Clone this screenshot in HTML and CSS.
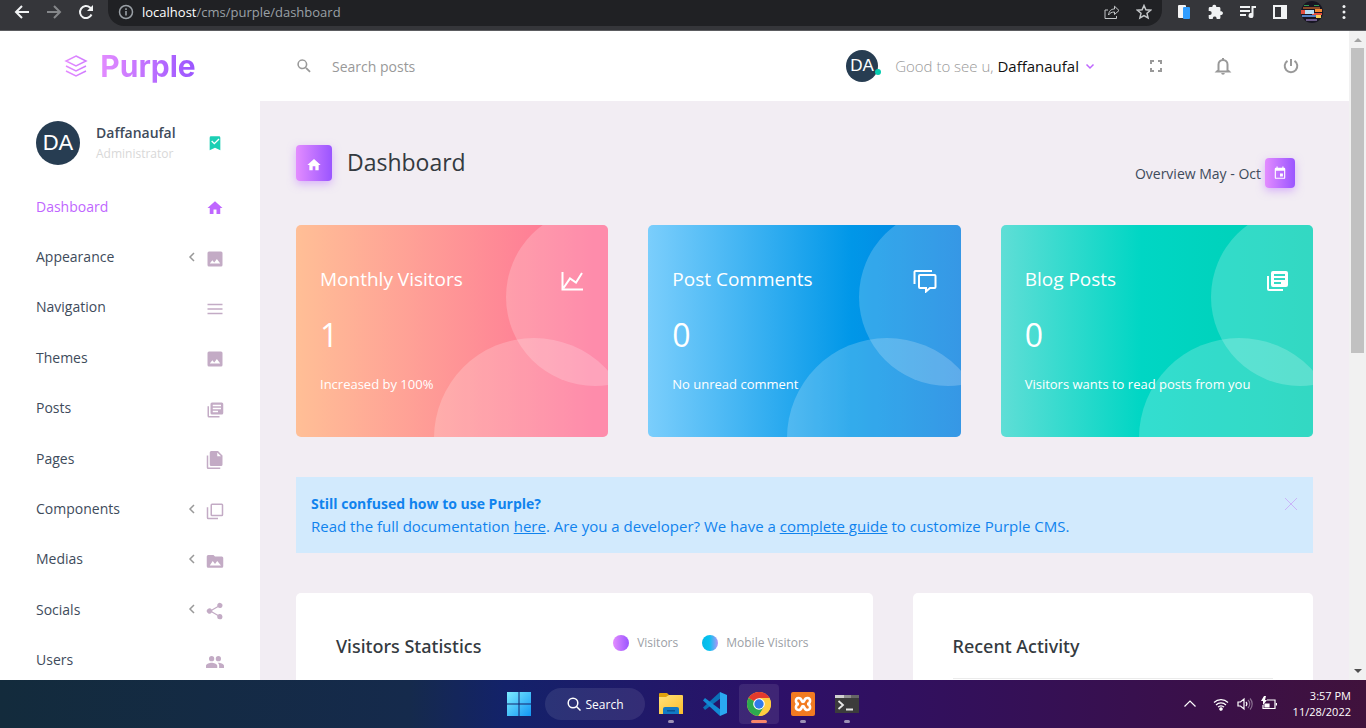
FILE: index.html
```html
<!DOCTYPE html>
<html lang="en">
<head>
<meta charset="utf-8">
<meta name="viewport" content="width=device-width, initial-scale=1">
<title>Purple CMS - Dashboard</title>
<link rel="stylesheet" href="styles.css">
</head>
<body>
<svg class="defs" aria-hidden="true">
  <defs>
    <linearGradient id="g-brand" x1="0" x2="1"><stop offset="0" stop-color="#e58cff"/><stop offset="1" stop-color="#d07cff"/></linearGradient>
    <linearGradient id="g-win" x1="0" y1="0" x2="1" y2="1"><stop offset="0" stop-color="#7cebff"/><stop offset="1" stop-color="#1296f5"/></linearGradient>
    <linearGradient id="g-folder" x1="0" y1="0" x2="1" y2="1"><stop offset="0" stop-color="#ffe27a"/><stop offset="1" stop-color="#fbbd2c"/></linearGradient>
  </defs>
  <symbol id="home" viewBox="0 0 24 24"><path d="M10 20v-6h4v6h5v-8h3L12 3 2 12h3v8z"/></symbol>
  <symbol id="image" viewBox="0 0 24 24"><path d="M22 20V4a2 2 0 0 0-2-2H4a2 2 0 0 0-2 2v16a2 2 0 0 0 2 2h16a2 2 0 0 0 2-2zM5 18l3.500-4.500 2.500 3 3.500-4.500 4.500 6z"/></symbol>
  <symbol id="menu" viewBox="0 0 24 24"><path d="M2 5h20v2H2zm0 6h20v2H2zm0 6h20v2H2z"/></symbol>
  <symbol id="library" viewBox="0 0 24 24"><path d="M4 7H2v13a2 2 0 0 0 2 2h14v-2H4zm17-5H8a2 2 0 0 0-2 2v12a2 2 0 0 0 2 2h13a2 2 0 0 0 2-2V4a2 2 0 0 0-2-2zM9 5h11v2H9zm0 4h11v2H9zm0 4h7v2H9z"/></symbol>
  <symbol id="pages" viewBox="0 0 24 24"><path d="M3 6H1v16a2 2 0 0 0 2 2h16v-2H3zM16 0H7a2 2 0 0 0-2 2v16a2 2 0 0 0 2 2h13a2 2 0 0 0 2-2V6zm-1 7V2l5 5z"/></symbol>
  <symbol id="boxes" viewBox="0 0 24 24"><path d="M3 7H1v14a2 2 0 0 0 2 2h13v-2H3zM21 2H8a2 2 0 0 0-2 2v13a2 2 0 0 0 2 2h13a2 2 0 0 0 2-2V4a2 2 0 0 0-2-2zm0 15H8V4h13z"/></symbol>
  <symbol id="folder-image" viewBox="0 0 24 24"><path d="M21 6h-9l-2-2H3a2 2 0 0 0-2 2v13a2 2 0 0 0 2 2h18a2 2 0 0 0 2-2V8a2 2 0 0 0-2-2zM5 18l4-6 3 4 3-4 5 6z"/></symbol>
  <symbol id="share" viewBox="0 0 24 24"><path d="M18 16.100c-.8 0-1.500.3-2 .8l-7.600-4.300a4 4 0 0 0 0-1.200L16 7.100A3.500 3.500 0 1 0 15 5l.1.800-7.500 4.300a3.500 3.500 0 1 0 0 3.800l7.500 4.300-.1.800a3.500 3.500 0 1 0 3-2.900z"/></symbol>
  <symbol id="users" viewBox="0 0 24 24"><path d="M16.500 11a3.500 3.500 0 1 0 0-7 3.500 3.500 0 0 0 0 7zm-9 0a3.500 3.500 0 1 0 0-7 3.500 3.500 0 0 0 0 7zm0 2C5 13 0 14.200 0 17v3h15v-3c0-2.800-5-4-7.500-4zm9 0h-1c1.200.9 2 2.200 2 4v3H24v-3c0-2.800-5-4-7.500-4z"/></symbol>
  <symbol id="left" viewBox="0 0 12 12"><path d="M8 2 4 6l4 4" fill="none" stroke="currentColor" stroke-width="1.500"/></symbol>
  <symbol id="down" viewBox="0 0 12 12"><path d="m2.500 4.500 3.500 3.500 3.500-3.500" fill="none" stroke="currentColor" stroke-width="1.500"/></symbol>
  <symbol id="search" viewBox="0 0 24 24"><path d="M9.500 2a7.500 7.500 0 0 1 5.900 12.100l.5.400h.8l5.300 5.500-1.800 1.800-5.500-5.300v-.8l-.4-.4A7.500 7.500 0 1 1 9.500 2m0 2.300a5.200 5.200 0 1 0 0 10.400 5.200 5.200 0 0 0 0-10.400z"/></symbol>
</svg>

<header class="browser">
  <button class="tool" aria-label="Back"><svg viewBox="0 0 16 16"><path class="line" d="M15 8H2m6-6L2 8l6 6"/></svg></button>
  <button class="tool dim" aria-label="Forward"><svg viewBox="0 0 16 16"><path class="line" d="M1 8h13M8 2l6 6-6 6"/></svg></button>
  <button class="tool" aria-label="Reload"><svg viewBox="0 0 16 16"><path class="line" d="M13.500 10.500A6 6 0 1 1 12 3.600l2 2"/><path d="M15 1v6H9z"/></svg></button>
  <div class="omnibox">
    <svg class="i16 muted" viewBox="0 0 16 16"><circle class="thin" cx="8" cy="8" r="6.500"/><path d="M7.200 7h1.600v4.500H7.200zM7.200 4.300h1.600v1.600H7.200z"/></svg>
    <span class="url"><b>localhost</b>/cms/purple/dashboard</span>
    <button class="tool soft" aria-label="Share"><svg viewBox="0 0 16 16"><path class="hair" d="M4 6H1v8.500h11.500V12M4.500 11c.5-4 2.500-6 6-6V2.200L15 6.500l-4.500 4V8c-3 0-4.500 1-6 3z"/></svg></button>
    <button class="tool soft" aria-label="Bookmark"><svg viewBox="0 0 16 16"><path class="thin" d="m8 1.500 1.900 4.300 4.700.4-3.600 3.100 1.100 4.600L8 11.500l-4.100 2.400L5 9.300 1.400 6.200l4.700-.4z"/></svg></button>
  </div>
  <div class="extensions">
    <button class="tool" aria-label="Device preview"><svg viewBox="0 0 16 16"><rect x="2" y="1" width="8" height="13" rx="1" fill="#f5f5f5"/><rect x="7" y="3" width="7" height="12" rx="1" fill="#2f9dff"/></svg></button>
    <button class="tool" aria-label="Extensions"><svg viewBox="0 0 16 16"><path d="M13.500 7.200h-1.100V4.400c0-.8-.6-1.400-1.400-1.400H8.200V2.100a2 2 0 0 0-3.800 0V3H2c-.7 0-1.300.6-1.300 1.400v2.500h1a2 2 0 0 1 0 4h-1v2.800c0 .8.600 1.300 1.300 1.300h2.800v-1a2 2 0 0 1 3.800 0v1H11c.8 0 1.400-.5 1.400-1.300v-2.800h1.100a1.900 1.900 0 0 0 0-3.700z"/></svg></button>
    <button class="tool" aria-label="Media"><svg viewBox="0 0 16 16"><path d="M0 2h10v2H0zm0 4h10v2H0zm0 4h6v2H0zM11.500 2H16v2h-2.500v7.500a2.500 2.500 0 1 1-2-2.400z"/></svg></button>
    <button class="tool" aria-label="Side panel"><svg viewBox="0 0 16 16"><path fill-rule="evenodd" d="M1 1h14v14H1zm2 2v10h6V3z"/></svg></button>
    <button class="tool profile" aria-label="Profile"><svg viewBox="0 0 22 22"><circle cx="11" cy="11" r="11" fill="#171522"/><path d="M3 4h5v1H3zm10 0h5v1h-5z" fill="#2f9a50"/><path d="M2 6h17v2H2z" fill="#8b4b27"/><path d="M0 9h9v4H0zm11 3h10v2H11z" fill="#e24f3f"/><path d="M4 9h9v4H4z" fill="#b8def5"/><path d="M14 8h7v3h-7z" fill="#f18a35"/><path d="M1 14h15v2H1z" fill="#5482c5"/><path d="M15 14h5v3h-5z" fill="#f7cf59"/><path d="M5 18h11v2H5z" fill="#6b5b89"/></svg></button>
    <button class="tool" aria-label="Menu"><svg viewBox="0 0 16 16"><circle cx="8" cy="2.500" r="1.500"/><circle cx="8" cy="8" r="1.500"/><circle cx="8" cy="13.500" r="1.500"/></svg></button>
  </div>
</header>

<div class="viewport">
  <div class="page">
    <header class="topbar">
      <a class="brand" href="#"><svg class="layers" viewBox="0 0 24 24"><path d="m12 2 10 5-10 5-10-5zM2 12l10 5 10-5M2 17l10 5 10-5"/></svg><span>Purple</span></a>
      <form class="find">
        <label for="q" aria-label="Search posts"><svg class="i16"><use href="#search"/></svg></label>
        <input id="q" type="text" placeholder="Search posts">
      </form>
      <button class="account"><span class="avatar small">DA<i class="online"></i></span><span class="greet">Good to see u, <em>Daffanaufal</em></span><svg class="i12"><use href="#down"/></svg></button>
      <div class="actions">
        <button aria-label="Fullscreen"><svg class="i16" viewBox="0 0 16 16"><path class="line" d="M3 6V3h3m4 0h3v3m0 4v3h-3m-4 0H3v-3"/></svg></button>
        <button aria-label="Notifications"><svg class="i18" viewBox="0 0 18 18"><path class="line" d="M4.500 13V7.500a4.500 4.500 0 0 1 9 0V13l1.500 1.500H3zM9 3V1"/><path d="M7.200 16h3.600a1.800 1.800 0 0 1-3.600 0z"/></svg></button>
        <button aria-label="Log out"><svg class="i18" viewBox="0 0 18 18"><path class="line" d="M9 2v7M5.500 3.800a6.300 6.300 0 1 0 7 0"/></svg></button>
      </div>
    </header>

    <div class="body">
      <aside class="sidebar">
        <div class="profile-card">
          <span class="avatar">DA</span>
          <div class="who"><strong>Daffanaufal</strong><small>Administrator</small></div>
          <svg class="i16 check" viewBox="0 0 24 24"><path d="M18 2H6a2 2 0 0 0-2 2v19l8-4 8 4V4a2 2 0 0 0-2-2z"/><path class="tick" d="m7 9 4 4 7-7"/></svg>
        </div>
        <nav class="nav">
          <a class="active" href="#"><span>Dashboard</span><svg class="i18"><use href="#home"/></svg></a>
          <a href="#"><span>Appearance</span><svg class="i12 arrow"><use href="#left"/></svg><svg class="i18"><use href="#image"/></svg></a>
          <a href="#"><span>Navigation</span><svg class="i18"><use href="#menu"/></svg></a>
          <a href="#"><span>Themes</span><svg class="i18"><use href="#image"/></svg></a>
          <a href="#"><span>Posts</span><svg class="i18"><use href="#library"/></svg></a>
          <a href="#"><span>Pages</span><svg class="i18"><use href="#pages"/></svg></a>
          <a href="#"><span>Components</span><svg class="i12 arrow"><use href="#left"/></svg><svg class="i18"><use href="#boxes"/></svg></a>
          <a href="#"><span>Medias</span><svg class="i12 arrow"><use href="#left"/></svg><svg class="i18"><use href="#folder-image"/></svg></a>
          <a href="#"><span>Socials</span><svg class="i12 arrow"><use href="#left"/></svg><svg class="i18"><use href="#share"/></svg></a>
          <a href="#"><span>Users</span><svg class="i18"><use href="#users"/></svg></a>
        </nav>
      </aside>

      <main class="content">
        <div class="heading">
          <span class="chip large"><svg class="i16"><use href="#home"/></svg></span>
          <h1>Dashboard</h1>
          <div class="period"><span>Overview May - Oct</span><button class="chip" aria-label="Choose period"><svg class="i14" viewBox="0 0 24 24"><path fill-rule="evenodd" d="M19 3h-1V1h-2v2H8V1H6v2H5a2 2 0 0 0-2 2v15a2 2 0 0 0 2 2h14a2 2 0 0 0 2-2V5a2 2 0 0 0-2-2zM5 8h14v12H5zm7 5h5v5h-5z"/></svg></button></div>
        </div>

        <div class="grid">
          <section class="stat coral">
            <header><h2>Monthly Visitors</h2><svg class="i24" viewBox="0 0 24 24"><path class="line" d="M2.500 3v17.500H23M3.500 19 10 9.500l6 4L22 4"/></svg></header>
            <p class="value">1</p><p class="note">Increased by 100%</p>
          </section>
          <section class="stat blue">
            <header><h2>Post Comments</h2><svg class="i24" viewBox="0 0 24 24"><path class="line" d="M1.500 15V3a1 1 0 0 1 1-1H19M7 6h14.500a1 1 0 0 1 1 1v11a1 1 0 0 1-1 1H17l-4 3.500V19H7a1 1 0 0 1-1-1V7a1 1 0 0 1 1-1z"/></svg></header>
            <p class="value">0</p><p class="note">No unread comment</p>
          </section>
          <section class="stat teal">
            <header><h2>Blog Posts</h2><svg class="i24"><use href="#library"/></svg></header>
            <p class="value">0</p><p class="note">Visitors wants to read posts from you</p>
          </section>

          <section class="alert">
            <div><strong>Still confused how to use Purple?</strong><p>Read the full documentation <a href="#">here</a>. Are you a developer? We have a <a href="#">complete guide</a> to customize Purple CMS.</p></div>
            <button aria-label="Dismiss"><svg class="i14" viewBox="0 0 14 14"><path d="m1 1 12 12M13 1 1 13"/></svg></button>
          </section>

          <section class="panel wide">
            <h3>Visitors Statistics</h3>
            <ul class="legend"><li><i class="dot violet"></i>Visitors</li><li><i class="dot cyan"></i>Mobile Visitors</li></ul>
          </section>
          <section class="panel narrow"><h3>Recent Activity</h3><hr></section>
        </div>
      </main>
    </div>
  </div>
  <div class="scrollbar" aria-hidden="true"><i class="up"></i><i class="thumb"></i><i class="dn"></i></div>
</div>

<footer class="taskbar">
  <div class="apps">
    <button class="app" aria-label="Start"><svg viewBox="0 0 24 24"><path fill="url(#g-win)" d="M0 0h11.500v11.500H0zm12.500 0H24v11.500H12.500zM0 12.500h11.500V24H0zm12.500 0H24V24H12.500z"/></svg></button>
    <button class="task-search"><svg class="i14" viewBox="0 0 14 14"><circle cx="6" cy="6" r="4.800"/><path d="m9.500 9.500 4 4"/></svg>Search</button>
    <button class="app open" aria-label="File Explorer"><svg viewBox="0 0 24 24"><path d="M0 2a1 1 0 0 1 1-1h7l3 3v5H0z" fill="#e0a10c"/><path d="M0 5h7l3-2h13a1 1 0 0 1 1 1v18H0z" fill="url(#g-folder)"/><path d="M4 22v-5a2 2 0 0 1 2-2h12a2 2 0 0 1 2 2v5z" fill="#117ac5"/><path d="M8 18h8v1.500H8z" fill="#095293"/></svg></button>
    <button class="app" aria-label="Visual Studio Code"><svg viewBox="0 0 24 24"><path d="M17 0 0 15.500 2 18 18 6z" fill="#0b70b8"/><path d="M2 6 0 8.500 17 24l1-6z" fill="#1289d4"/><path d="m17 0 7 3v18l-7 3z" fill="#2aa8f2"/></svg></button>
    <button class="app current" aria-label="Chrome"><svg viewBox="0 0 24 24"><circle cx="12" cy="12" r="12" fill="#ffcd40"/><path d="M12 12 1.600 6a12 12 0 0 1 20.800 0z" fill="#e33b2e"/><path d="M1.600 6a12 12 0 0 0 9.800 18L17 15l-5-3z" fill="#2da94f"/><path d="M12 6h10.400A12 12 0 0 1 11.400 24L17 15z" fill="#ffcd40"/><circle cx="12" cy="12" r="5.800" fill="#fff"/><circle cx="12" cy="12" r="4.700" fill="#317bea"/></svg></button>
    <button class="app open" aria-label="XAMPP"><svg viewBox="0 0 24 24"><rect width="24" height="24" rx="2" fill="#f27b21"/><path d="M8 12c-3.500 0-4.500-6-.5-6S10 10 12 10s.500-4 4.500-4 3 6-.5 6c3.500 0 4.500 6 .5 6S14 14 12 14s-.5 4-4.500 4-3-6 .5-6z" fill="none" stroke="#fff" stroke-width="2.600"/></svg></button>
    <button class="app open" aria-label="Terminal"><svg viewBox="0 0 24 24"><path d="M0 3h24v18H0z" fill="#3c3c3c"/><path d="M0 3h9v3H0z" fill="#d0d0d0"/><path d="M9 3h7v3H9z" fill="#8f8f8f"/><path d="M16 3h8v3h-8z" fill="#666"/><path d="m3.500 9 4.500 4-4.500 4M11 17.500h7" fill="none" stroke="#e8e8e8" stroke-width="1.800"/></svg></button>
  </div>
  <div class="tray">
    <svg class="i14" viewBox="0 0 14 14"><path d="m1.500 9.500 5.500-5.500 5.500 5.500"/></svg>
    <div class="status">
      <svg class="i16" viewBox="0 0 16 16"><path d="M1 6.500a10 10 0 0 1 14 0M3 9a7 7 0 0 1 10 0M5 11.200a4 4 0 0 1 6 0"/><circle cx="8" cy="13" r="1.200" fill="#fff"/></svg>
      <svg class="i16" viewBox="0 0 16 16"><path d="M1 6h2.500L7 3v10l-3.500-3H1zM9 6a3 3 0 0 1 0 4"/><path opacity=".4" d="M11 4a5.500 5.500 0 0 1 0 8M13 2.500a8 8 0 0 1 0 11"/></svg>
      <svg class="i16" viewBox="0 0 16 16"><path d="M6 4h8v8.500H2V9M15.500 7v2.500"/><path fill="#fff" d="M4 8h4v3H4z"/><path fill="#fff" stroke="none" d="M3 0 0 5h2v4l4-5H4l1-4z"/></svg>
    </div>
    <div class="clock"><span>3:57 PM</span><span>11/28/2022</span></div>
  </div>
</footer>
</body>
</html>
```

FILE: styles.css
```css
:root {
  --ui: "Open Sans", "Noto Sans", sans-serif;
  --violet: linear-gradient(90deg, #e38cff, #9a55ff);
  --ink: #3e4b5b;
  --mauve: #c3abc5;
}
* { box-sizing: border-box; margin: 0; padding: 0; }
body { display: flex; flex-direction: column; height: 100vh; overflow: hidden; font-family: var(--ui); font-size: 14px; color: var(--ink); }
button { border: 0; background: none; font: inherit; color: inherit; cursor: pointer; }
svg { display: block; flex: none; fill: currentColor; }
a { color: inherit; text-decoration: none; }
.defs { position: absolute; width: 0; height: 0; }
.i12 { width: 12px; height: 12px; }
.i14 { width: 14px; height: 14px; }
.i16 { width: 16px; height: 16px; }
.i18 { width: 18px; height: 18px; }
.i24 { width: 24px; height: 24px; }
.line { fill: none; stroke: currentColor; stroke-width: 2; }
.thin { fill: none; stroke: currentColor; stroke-width: 1.5; }
.hair { fill: none; stroke: currentColor; stroke-width: 1; }

/* Browser toolbar */
.browser { display: flex; align-items: flex-start; flex: none; height: 31px; padding-left: 14px; background: #35363a; border-bottom: 1px solid #5b5c60; color: #f1f3f4; }
.tool { display: flex; flex: none; align-items: center; justify-content: center; width: 16px; height: 24px; margin-right: 16px; }
.tool svg { width: 16px; height: 16px; }
.dim { color: #85878a; }
.soft { color: #c4c7c9; margin: 0 0 0 16px; }
.omnibox { display: flex; align-items: center; flex: 1; height: 26px; margin: 0 14px 0 -2px; padding: 0 10px 2px; background: #202124; border-radius: 0 0 16px 16px; }
.omnibox .muted { color: #9aa0a6; }
.url { flex: 1; margin-left: 8px; font-size: 13px; color: #9aa0a6; }
.url b { font-weight: 400; color: #fff; }
.extensions { display: flex; padding-right: 14px; gap: 16px; }
.extensions .tool { margin: 0; }
.extensions .profile { width: 22px; margin: 0 -3px; }
.profile svg { width: 22px; height: 22px; }

/* Scrollable page area */
.viewport { display: flex; flex: 1; min-height: 0; }
.page { flex: 1; min-width: 0; overflow: hidden; background: #fff; }
.scrollbar { display: flex; flex-direction: column; align-items: center; flex: none; width: 17px; background: #f1f1f1; }
.scrollbar .thumb { width: 13px; height: 305px; background: #c1c1c1; }
.up, .dn { width: 0; height: 0; border: 4px solid transparent; }
.up { margin: 3px 0 6px; border-bottom-color: #a3a3a3; }
.dn { margin: auto 0 3px; border-top-color: #505050; }

/* Top bar */
.topbar { display: flex; align-items: center; height: 70px; padding-right: 49px; }
.brand { display: flex; align-items: center; justify-content: center; gap: 12px; width: 260px; font-family: Inter, sans-serif; font-size: 30px; line-height: 36px; font-weight: 700; }
.brand span { background: var(--violet); background-clip: text; -webkit-background-clip: text; color: transparent; }
.layers { width: 24px; height: 24px; fill: none; stroke: url(#g-brand); stroke-width: 1.5; }
.find { display: flex; align-items: center; flex: 1; gap: 20px; padding-left: 36px; }
.find svg { color: #999; }
.find input { width: 200px; border: 0; outline: 0; font: 14px var(--ui); color: #777; }
.find input::placeholder { color: #999; opacity: 1; }
.account { display: flex; align-items: center; font-size: 15px; color: #bf66ff; gap: 5px; }
.greet { font-weight: 300; color: #999; }
.greet em { font-style: normal; font-weight: 400; color: #111; }
.avatar { display: flex; flex: none; align-items: center; justify-content: center; width: 44px; height: 44px; border-radius: 50%; background: #273d52; color: #fff; font: 22px "Liberation Sans", sans-serif; }
.avatar.small { position: relative; width: 32px; height: 32px; margin-right: 12px; font-size: 17px; }
.online { position: absolute; right: -3px; bottom: 7px; width: 6px; height: 6px; border-radius: 50%; background: #05cdb0; }
.actions { display: flex; align-items: center; gap: 50px; margin-left: 52px; color: #999; }

/* Sidebar */
.body { display: flex; align-items: stretch; }
.sidebar { flex: none; width: 260px; }
.profile-card { display: flex; align-items: center; gap: 16px; padding: 20px 37px 16px 36px; }
.who { display: flex; flex: 1; flex-direction: column; gap: 3px; padding-top: 1px; }
.who strong { font-size: 14px; line-height: 18px; font-weight: 600; }
.who small { font-size: 12px; line-height: 18px; color: #d8d8d8; }
.check { color: #1bcfb4; }
.tick { fill: none; stroke: #fff; stroke-width: 2; }
.nav { display: grid; grid-auto-rows: 1fr; min-height: 504px; }
.nav a { display: flex; align-items: center; gap: 8px; padding: 0 36px; }
.nav span { flex: 1; }
.nav svg { margin-top: 4px; color: var(--mauve); }
.nav .arrow { margin-top: 0; color: #999; }
.nav .active, .nav .active svg { color: #bf66ff; }

/* Content */
.content { flex: 1; min-width: 0; padding: 44px 36px; background: #f2edf3; }
.heading { display: flex; align-items: flex-start; gap: 15px; padding-right: 18px; margin-bottom: 37px; }
.heading h1 { flex: 1; font-size: 23px; line-height: 34px; font-weight: 400; color: #343a40; }
.chip { display: flex; align-items: center; justify-content: center; flex: none; width: 30px; height: 30px; border-radius: 4px; background: var(--violet); box-shadow: 0 3px 8px rgba(190, 120, 255, .5); color: #fff; }
.chip.large { width: 36px; height: 36px; padding-top: 4px; }
.period { display: flex; align-items: center; gap: 4px; padding-top: 13px; }
.grid { display: grid; grid-template-columns: repeat(12, minmax(0, 1fr)); gap: 40px; }
.stat { position: relative; grid-column: span 4; overflow: hidden; padding: 40px 24px 43px; border-radius: 5px; color: #fff; }
.stat::before, .stat::after { content: ""; position: absolute; border-radius: 50%; background: rgba(255, 255, 255, .2); }
.stat::before { width: 178px; height: 178px; right: -76px; top: -17px; }
.stat::after { width: 200px; height: 200px; right: -26px; top: 113px; }
.coral { background: linear-gradient(90deg, #ffbf96, #fe7096 95%); }
.blue { background: linear-gradient(90deg, #7bcefc, #0097e8 65%, #047edf); }
.teal { background: linear-gradient(90deg, #5fded6, #00d6c4 45%, #00cfb4); }
.stat header { position: relative; z-index: 1; display: flex; justify-content: space-between; margin-bottom: 28px; }
.stat h2 { font-size: 19px; line-height: 28px; font-weight: 400; }
.stat svg { margin-top: 4px; }
.value { font-size: 32px; line-height: 28px; margin-bottom: 25px; }
.note { font-size: 13px; line-height: 20px; }
.value, .note { position: relative; z-index: 1; }
.alert { grid-column: 1 / -1; display: flex; justify-content: space-between; align-items: flex-start; padding: 15px 15px 16px; background: #d2eafd; color: #1083ee; font-size: 15px; line-height: 22px; }
.alert strong { font-size: 14px; font-weight: 700; }
.alert a { text-decoration: underline; }
.alert button { padding-top: 5px; color: #c9b5f8; }
.alert svg { stroke: currentColor; }
.panel { display: flex; flex-wrap: wrap; align-content: flex-start; justify-content: space-between; min-height: 400px; padding: 40px; border-radius: 5px; background: #fff; }
.wide { grid-column: span 7; padding-right: 64px; }
.narrow { grid-column: span 5; }
.panel h3 { font-family: "Noto Sans", sans-serif; font-size: 18px; line-height: 26px; font-weight: 500; color: #343a40; }
.panel hr { width: 100%; height: 1px; margin-top: 19px; border: 0; background: #ebebeb; }
.legend { display: flex; align-items: flex-start; gap: 24px; list-style: none; font-size: 12px; line-height: 20px; color: #9c9fa6; }
.legend li { display: flex; align-items: center; gap: 8px; }
.dot { width: 16px; height: 16px; border-radius: 50%; }
.violet { background: var(--violet); }
.cyan { background: linear-gradient(90deg, #05b8e8, #05c3f0 45%, #b196f7); }

/* Desktop taskbar */
.taskbar { display: grid; grid-template-columns: 1fr auto 1fr; align-items: center; flex: none; height: 48px; background: linear-gradient(90deg, #132b3c, #152a4c 30%, #13226a 37%, #2d1068 57%, #3b1047 90%, #40123c); color: #fff; }
.apps { grid-column: 2; display: flex; align-items: center; gap: 4px; }
.app { display: flex; align-items: center; justify-content: center; position: relative; width: 40px; height: 40px; border-radius: 4px; }
.app svg { width: 24px; height: 24px; }
.open::after, .current::after { content: ""; position: absolute; bottom: 1px; width: 6px; height: 3px; border-radius: 2px; background: #9c91b5; }
.current { background: rgba(255, 255, 255, .09); }
.current::after { width: 16px; background: #f98568; }
.task-search { display: flex; align-items: center; justify-content: center; gap: 5px; width: 100px; height: 32px; margin: 0 2px; border-radius: 16px; background: rgba(255, 255, 255, .09); font-size: 12px; }
.task-search svg { fill: none; stroke: #fff; stroke-width: 1.5; }
.tray { display: flex; align-items: center; justify-content: flex-end; gap: 16px; padding-right: 15px; }
.status { display: flex; gap: 8px; }
.tray svg { fill: none; stroke: #fff; stroke-width: 1.2; }
.clock { display: flex; flex-direction: column; align-items: flex-end; font-size: 11px; line-height: 16px; }
```
